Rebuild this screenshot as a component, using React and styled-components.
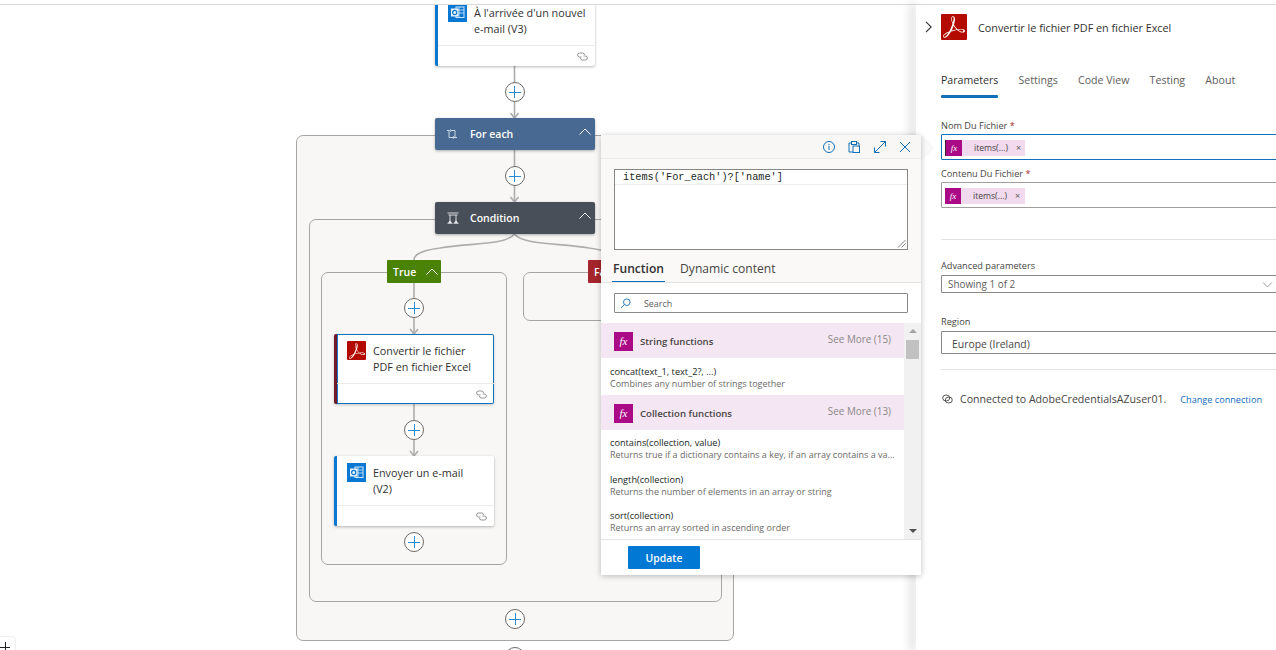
import React from 'react';
import styled, { createGlobalStyle } from 'styled-components';
import { SiAdobeacrobatreader } from 'react-icons/si';

const FONT = `"Open Sans", "Noto Sans", "Liberation Sans", sans-serif`;

const Global = createGlobalStyle`
  html, body { margin: 0; padding: 0; background: #fff; overflow: hidden; }
  * { box-sizing: border-box; }
  body { font-family: ${FONT}; color: #323130; }
`;

const Page = styled.div`
  position: relative;
  width: 1276px;
  height: 650px;
  display: flex;
  flex-direction: column;
  overflow: hidden;
  background: #fff;
`;
const TopStrip = styled.div`
  flex: 0 0 5px;
  border-bottom: 1px solid #d9d9d9;
`;
const Main = styled.div`
  flex: 1;
  display: flex;
  min-height: 0;
`;

/* ---------- diagram canvas ---------- */
const Canvas = styled.div`
  position: relative;
  flex: 1;
  overflow: hidden;
`;
const EdgeLayer = styled.svg`
  position: absolute;
  left: 0;
  top: -5px;
  width: 916px;
  height: 650px;
  z-index: 2;
`;
const GroupBox = styled.div`
  position: absolute;
  left: ${p => p.$x}px;
  top: ${p => p.$y - 5}px;
  width: ${p => p.$w}px;
  height: ${p => p.$h}px;
  background: #f8f7f6;
  border: 1.5px solid #a6a6a6;
  border-radius: 7px;
  z-index: 1;
`;
const CardNode = styled.div`
  position: absolute;
  left: ${p => p.$x}px;
  top: ${p => p.$y - 5}px;
  width: 160px;
  height: 70px;
  display: flex;
  flex-direction: column;
  background: #fff;
  border-radius: 2px;
  border-left: 3px solid ${p => p.$accent};
  box-shadow: ${p => p.$selected
    ? 'inset 0 0 0 1px #0f72bd, 0 1px 3px rgba(0,0,0,.2)'
    : '0 1px 3px rgba(0,0,0,.28)'};
  z-index: 3;
`;
const CardBody = styled.div`
  flex: 1;
  display: flex;
  gap: 7px;
  padding: 7px 4px 0 10px;
`;
const CardText = styled.div`
  font-size: 10.8px;
  line-height: 16px;
  color: #323130;
  padding-top: 2px;
  white-space: nowrap;
`;
const CardFoot = styled.div`
  flex: 0 0 21px;
  display: flex;
  align-items: center;
  justify-content: flex-end;
  padding-right: 7px;
  border-top: 1px solid #edebe9;
`;
const IconTile = styled.span`
  flex: 0 0 ${p => p.$size}px;
  width: ${p => p.$size}px;
  height: ${p => p.$size}px;
  display: flex;
  align-items: center;
  justify-content: center;
  border-radius: 1px;
  background: ${p => p.$bg};
  overflow: hidden;
`;
const HeaderNode = styled.div`
  position: absolute;
  left: 435px;
  top: ${p => p.$y - 5}px;
  width: 160px;
  height: 32px;
  display: flex;
  align-items: center;
  padding: 0 2px 0 12px;
  background: ${p => p.$bg};
  color: #fff;
  border-radius: 2px;
  box-shadow: 0 1px 3px rgba(0,0,0,.3);
  z-index: 3;
`;
const HeaderTitle = styled.span`
  flex: 1;
  margin-left: ${p => p.$gap}px;
  font-size: 10.5px;
  font-weight: 600;
`;
const HeaderChevron = styled.span`
  display: flex;
  margin-top: -4px;
`;
const BranchNode = styled.div`
  position: absolute;
  left: ${p => p.$x}px;
  top: 255px;
  width: 54px;
  height: 23px;
  display: flex;
  align-items: center;
  padding: 0 1px 0 6px;
  background: ${p => p.$bg};
  color: #fff;
  border-radius: 1px;
  font-size: 10.5px;
  font-weight: 600;
  z-index: 3;
`;
const BranchLabel = styled.span`
  flex: 1;
`;
const PlusNode = styled.div`
  position: absolute;
  left: ${p => p.$x - 10}px;
  top: ${p => p.$y - 15}px;
  width: 20px;
  height: 20px;
  border-radius: 50%;
  border: 1px solid #6b6a68;
  background: #fff;
  z-index: 4;
  &::before, &::after {
    content: '';
    position: absolute;
    background: #2a8bd8;
  }
  &::before { left: 3px; right: 3px; top: 8.5px; height: 1px; }
  &::after { top: 3px; bottom: 3px; left: 8.5px; width: 1px; }
`;
const ZoomCorner = styled.div`
  position: absolute;
  left: -8px;
  bottom: -10px;
  width: 24px;
  height: 24px;
  border: 1px solid #eeeeee;
  border-radius: 4px;
  background: #fff;
  z-index: 5;
  &::before, &::after {
    content: '';
    position: absolute;
    background: #222;
  }
  &::before { left: 7px; width: 10px; top: 10px; height: 1px; }
  &::after { left: 11.5px; width: 1px; top: 5px; height: 11px; }
`;

/* ---------- right panel ---------- */
const Panel = styled.aside`
  flex: 0 0 360px;
  position: relative;
  overflow: hidden;
  padding: 9px 0 0 25px;
  background: #fff;
  z-index: 6;
`;
const PanelEdge = styled.div`
  flex: 0 0 0;
  box-shadow: -3px 0 10px 2px rgba(0,0,0,.22);
  z-index: 5;
`;
const PanelHead = styled.header`
  display: flex;
  align-items: center;
  height: 26px;
  margin-left: -16px;
`;
const CollapseBtn = styled.span`
  flex: 0 0 16px;
  display: flex;
`;
const PanelTitle = styled.h1`
  margin: 0 0 0 11px;
  font-size: 10.8px;
  font-weight: 400;
  color: #323130;
`;
const TabRow = styled.nav`
  display: flex;
  gap: 20.2px;
  height: 28px;
  margin-top: 30px;
`;
const PanelTab = styled.span`
  position: relative;
  font-size: 10.6px;
  line-height: 20px;
  color: ${p => (p.$active ? '#323130' : '#605e5c')};
  ${p => p.$active && `
    &::after {
      content: '';
      position: absolute;
      left: 0;
      right: 0;
      top: 25px;
      height: 3px;
      background: #1170b8;
      border-radius: 1px;
    }
  `}
`;
const FieldLabel = styled.label`
  display: block;
  height: 12px;
  margin-top: ${p => p.$top}px;
  margin-bottom: ${p => p.$bottom}px;
  font-size: 9.2px;
  line-height: 12px;
  color: #484644;
  & b { color: #a4262c; font-weight: 400; }
`;
const TokenInput = styled.div`
  width: 345px;
  height: 26px;
  display: flex;
  align-items: center;
  padding: 1px 0 0 3px;
  border: 1px solid ${p => (p.$focus ? '#0f72bd' : '#a19f9d')};
  border-radius: 1px;
`;
const Token = styled.span`
  display: flex;
  align-items: center;
  width: 80px;
  height: 16px;
  background: #f1d9ee;
  color: #484644;
  font-size: 8.6px;
  ${p => p.$caret && `border-left: 1px solid #3b1f39;`}
`;
const TokenIcon = styled.span`
  flex: 0 0 16px;
  height: 16px;
  display: flex;
  align-items: center;
  justify-content: center;
  background: #aa0a86;
  color: #fff;
  font: italic 9px "Liberation Serif", serif;
`;
const TokenText = styled.span`
  margin-left: 12px;
`;
const TokenClose = styled.span`
  margin-left: 8px;
  color: #605e5c;
  font-size: 9px;
`;
const Divider = styled.hr`
  width: 340px;
  margin: ${p => p.$top}px 0 0;
  border: 0;
  border-top: 1px solid #e3e2e0;
`;
const DropDown = styled.div`
  width: 345px;
  height: 18px;
  display: flex;
  align-items: center;
  padding: 0 5px 0 6px;
  border: 1px solid #8a8886;
  border-radius: 1px;
  font-size: 9.9px;
  color: #605e5c;
`;
const DropText = styled.span`
  width: 313px;
`;
const RegionInput = styled.div`
  width: 345px;
  height: 23px;
  display: flex;
  align-items: center;
  padding: 2px 0 0 10px;
  border: 1px solid #8a8886;
  border-radius: 1px;
  font-size: 10.4px;
  color: #484644;
`;
const ConnectionRow = styled.div`
  display: flex;
  align-items: center;
  height: 16px;
  margin-top: 21px;
  padding-left: 1px;
  font-size: 10.6px;
  color: #484644;
  white-space: nowrap;
`;
const ConnectionText = styled.span`
  margin-left: 7px;
`;
const ChangeLink = styled.a`
  margin-left: 14px;
  font-size: 9.15px;
  color: #0f6cbd;
`;

/* ---------- expression popover ---------- */
const Popover = styled.section`
  position: absolute;
  left: 601px;
  top: 135px;
  width: 320px;
  height: 440px;
  display: flex;
  flex-direction: column;
  background: #fff;
  box-shadow: 0 1px 6px rgba(0,0,0,.26);
  z-index: 8;
`;
const Callout = styled.div`
  position: absolute;
  left: 910px;
  top: 139px;
  width: 18.4px;
  height: 18.4px;
  background: #fafafa;
  transform: rotate(45deg);
  box-shadow: 1px -1px 2px rgba(0,0,0,.05);
  z-index: 7;
`;
const PopHead = styled.div`
  flex: 0 0 24px;
  display: flex;
  align-items: center;
  justify-content: flex-end;
  gap: 11.5px;
  padding-right: 9px;
  background: #f8f7f6;
  border-bottom: 1px solid #ecebe9;
`;
const EditorArea = styled.div`
  flex: 0 0 124px;
  padding: 10px 13px 0;
  background: #faf9f8;
  border-bottom: 1px solid #e6e5e3;
`;
const CodeBox = styled.div`
  position: relative;
  height: 81px;
  background: #fff;
  border: 1px solid #8a8886;
`;
const CodeLine = styled.div`
  height: 15px;
  padding-left: 8px;
  font: 10.25px/14px "Liberation Mono", monospace;
  color: #201f1e;
  border-bottom: 1px solid #eeeeee;
`;
const ResizeGrip = styled.svg`
  position: absolute;
  right: 1px;
  bottom: 1px;
`;
const FnTabs = styled.div`
  display: flex;
  gap: 14px;
  height: 24px;
  margin-top: 8px;
  margin-left: -2px;
`;
const FnTab = styled.span`
  position: relative;
  padding: 0 1px;
  font-size: 12.1px;
  line-height: 21px;
  font-weight: ${p => (p.$active ? 600 : 400)};
  color: ${p => (p.$active ? '#323130' : '#484644')};
  ${p => p.$active && `
    &::after {
      content: '';
      position: absolute;
      left: 0;
      right: 0;
      bottom: 0;
      height: 1.5px;
      background: #0f72bd;
    }
  `}
`;
const SearchArea = styled.div`
  flex: 0 0 40px;
  padding: 10px 13px;
`;
const SearchBox = styled.div`
  height: 20px;
  display: flex;
  align-items: center;
  gap: 13px;
  padding: 1px 0 0 5px;
  border: 1px solid #8a8886;
  border-radius: 1px;
  font-size: 8.9px;
  color: #605e5c;
`;
const ListWrap = styled.div`
  flex: 1;
  display: flex;
  min-height: 0;
`;
const FnList = styled.div`
  flex: 1;
  overflow: hidden;
`;
const FnGroup = styled.div`
  height: 35px;
  display: flex;
  align-items: center;
  padding: 1px 13px 0;
  background: #f4e6f3;
`;
const GroupIcon = styled.span`
  flex: 0 0 19px;
  height: 19px;
  display: flex;
  align-items: center;
  justify-content: center;
  background: #aa0a86;
  color: #fff;
  font: italic 11px "Liberation Serif", serif;
`;
const GroupName = styled.span`
  flex: 1;
  margin-left: 7px;
  font-size: 9.6px;
  font-weight: 600;
  color: #484644;
`;
const SeeMore = styled.span`
  font-size: 9.9px;
  color: #8a8886;
  position: relative;
  top: -2px;
`;
const FnItem = styled.div`
  height: ${p => p.$h}px;
  padding: ${p => p.$pad}px 6px 0 9px;
`;
const FnSig = styled.div`
  font-size: 9.2px;
  line-height: 12px;
  color: #201f1e;
`;
const FnDesc = styled.div`
  font-size: 9px;
  line-height: 12px;
  color: #6b6a68;
  white-space: nowrap;
  overflow: hidden;
`;
const Scrollbar = styled.div`
  flex: 0 0 17px;
  position: relative;
  background: #f1f1f1;
`;
const ScrollThumb = styled.div`
  position: absolute;
  left: 2px;
  right: 2px;
  top: 17px;
  height: 19px;
  background: #c1c1c1;
`;
const ScrollArrow = styled.span`
  position: absolute;
  left: 5px;
  ${p => (p.$up ? 'top: 6px' : 'bottom: 6px')};
  border-left: 4px solid transparent;
  border-right: 4px solid transparent;
  ${p => (p.$up ? 'border-bottom: 4px solid #a3a3a3' : 'border-top: 4px solid #505050')};
`;
const PopFoot = styled.div`
  flex: 0 0 36px;
  display: flex;
  align-items: flex-start;
  padding: 6px 0 0 27px;
  border-top: 1px solid #e6e5e3;
`;
const UpdateBtn = styled.button`
  width: 72px;
  height: 23px;
  padding: 0;
  border: 0;
  border-radius: 1px;
  background: #0078d4;
  color: #fff;
  font-family: ${FONT};
  font-size: 10.4px;
  font-weight: 600;
`;

/* ---------- drawings ---------- */
const Chevron = ({ color = '#fff', up = true, size = 16, sw = 1 }) => (
  <svg width={size} height={size} viewBox="0 0 16 16" fill="none" stroke={color} strokeWidth={sw}>
    <path d={up ? 'M2.5 10.5 8 5l5.5 5.5' : 'M2.5 5.5 8 11l5.5-5.5'} />
  </svg>
);
const OutlookGlyph = () => (
  <svg width="19" height="19" viewBox="0 0 19 19">
    <rect width="19" height="19" fill="#0a78d2" />
    <rect x="8" y="4" width="8" height="10.5" fill="none" stroke="#cfe6f8" strokeWidth="1" />
    <path d="M8 7h8M8 10h8M11 4v10" stroke="#cfe6f8" strokeWidth=".8" />
    <rect x="3" y="5.5" width="7.5" height="8" fill="#e8f3fc" />
    <circle cx="6.7" cy="9.5" r="2.1" fill="none" stroke="#0a78d2" strokeWidth="1.2" />
  </svg>
);
const PdfGlyph = ({ size }) => (
  <IconTile $size={size} $bg="#b30b00">
    <SiAdobeacrobatreader size={Math.round(size * 0.86)} color="#fff" />
  </IconTile>
);
const LinkGlyph = ({ color = '#8a8886' }) => (
  <svg width="11" height="9" viewBox="0 0 11 9" fill="none" stroke={color} strokeWidth=".9">
    <path d="M4.5 5H2.6a2 2 0 0 1 0-4h3a2 2 0 0 1 1.9 2" />
    <path d="M6.5 4h1.9a2 2 0 0 1 0 4h-3a2 2 0 0 1-1.9-2" />
  </svg>
);
const LoopGlyph = () => (
  <svg width="10" height="10" viewBox="0 0 10 10" fill="none" stroke="#dbe4ef" strokeWidth=".9">
    <path d="M0 1.500h2v7h6" />
    <path d="M10 8.500H8v-7H3.500" />
    <path d="M4 0 2.800 1.500 4 3M6 7 7.200 8.500 6 10" strokeWidth=".7" />
  </svg>
);
const ConditionGlyph = () => (
  <svg width="12" height="12" viewBox="0 0 12 12" fill="none" stroke="#e6e8ea" strokeWidth=".9">
    <path d="M.5 1h11M1.500 3h9M3 3v5M9 3v5M.5 11.300h5M6.500 11.300h5" />
    <path d="M3 7.500 1.200 11h3.600zM9 7.500 7.200 11h3.600z" fill="#e6e8ea" stroke="none" />
  </svg>
);
const Arrow = ({ x, y }) => <path d={`M${x - 4} ${y - 5}L${x} ${y}L${x + 4} ${y - 5}`} />;

const Edges = () => (
  <EdgeLayer viewBox="0 0 916 650" fill="none" stroke="#adadad" strokeWidth="1.6">
    <path d="M514.500 66V118M514.500 150V202M414 283V334M414 404V456" />
    <path d="M514.500 234C506 245 470 243 440 248C425 250 414 253 414 260" />
    <path d="M514.500 234C523 245 559 243 589 248C604 250 615 253 615 260" />
    <Arrow x={514.5} y={118} />
    <Arrow x={514.5} y={202} />
    <Arrow x={414} y={334} />
    <Arrow x={414} y={456} />
  </EdgeLayer>
);

const ActionCard = ({ x, y, accent, selected, icon, lines }) => (
  <CardNode $x={x} $y={y} $accent={accent} $selected={selected}>
    <CardBody>
      {icon}
      <CardText>{lines[0]}<br />{lines[1]}</CardText>
    </CardBody>
    <CardFoot><LinkGlyph /></CardFoot>
  </CardNode>
);

const TokenChip = ({ caret }) => (
  <Token $caret={caret}>
    <TokenIcon>fx</TokenIcon>
    <TokenText>items(...)</TokenText>
    <TokenClose>×</TokenClose>
  </Token>
);

const FunctionGroup = ({ name, more }) => (
  <FnGroup>
    <GroupIcon>fx</GroupIcon>
    <GroupName>{name}</GroupName>
    <SeeMore>See More ({more})</SeeMore>
  </FnGroup>
);

const FunctionItem = ({ sig, desc, h, pad }) => (
  <FnItem $h={h} $pad={pad}>
    <FnSig>{sig}</FnSig>
    <FnDesc>{desc}</FnDesc>
  </FnItem>
);

export default function App() {
  return (
    <Page>
      <Global />
      <TopStrip />
      <Main>
        <Canvas>
          <GroupBox $x={296} $y={135} $w={438} $h={506} />
          <GroupBox $x={309} $y={219} $w={413} $h={383} />
          <GroupBox $x={321} $y={272} $w={186} $h={293} />
          <GroupBox $x={523} $y={272} $w={186} $h={49} />
          <Edges />
          <ActionCard x={435} y={-4} accent="#0a78d2" icon={<OutlookGlyph />} lines={["À l'arrivée d'un nouvel", 'e-mail (V3)']} />
          <HeaderNode $y={118} $bg="#486991">
            <LoopGlyph />
            <HeaderTitle $gap={13}>For each</HeaderTitle>
            <HeaderChevron><Chevron /></HeaderChevron>
          </HeaderNode>
          <HeaderNode $y={202} $bg="#484f58">
            <ConditionGlyph />
            <HeaderTitle $gap={11}>Condition</HeaderTitle>
            <HeaderChevron><Chevron /></HeaderChevron>
          </HeaderNode>
          <BranchNode $x={387} $bg="#498205">
            <BranchLabel>True</BranchLabel>
            <Chevron />
          </BranchNode>
          <BranchNode $x={588} $bg="#a4262c">
            <BranchLabel>False</BranchLabel>
          </BranchNode>
          <ActionCard x={334} y={334} accent="#701b2a" selected icon={<PdfGlyph size={19} />} lines={['Convertir le fichier', 'PDF en fichier Excel']} />
          <ActionCard x={334} y={456} accent="#0a78d2" icon={<OutlookGlyph />} lines={['Envoyer un e-mail', '(V2)']} />
          <PlusNode $x={514.5} $y={92} />
          <PlusNode $x={514.5} $y={176} />
          <PlusNode $x={414} $y={308} />
          <PlusNode $x={414} $y={430} />
          <PlusNode $x={414} $y={542} />
          <PlusNode $x={515} $y={619} />
          <PlusNode $x={515} $y={657} />
          <ZoomCorner />
        </Canvas>
        <PanelEdge />
        <Panel>
          <PanelHead>
            <CollapseBtn>
              <svg width="8" height="12" viewBox="0 0 8 12" fill="none" stroke="#323130" strokeWidth="1.1">
                <path d="M1 .8 6.200 6 1 11.200" />
              </svg>
            </CollapseBtn>
            <PdfGlyph size={26} />
            <PanelTitle>Convertir le fichier PDF en fichier Excel</PanelTitle>
          </PanelHead>
          <TabRow>
            <PanelTab $active>Parameters</PanelTab>
            <PanelTab>Settings</PanelTab>
            <PanelTab>Code View</PanelTab>
            <PanelTab>Testing</PanelTab>
            <PanelTab>About</PanelTab>
          </TabRow>
          <FieldLabel $top={22} $bottom={2}>Nom Du Fichier <b>*</b></FieldLabel>
          <TokenInput $focus><TokenChip caret /></TokenInput>
          <FieldLabel $top={8} $bottom={2}>Contenu Du Fichier <b>*</b></FieldLabel>
          <TokenInput><TokenChip /></TokenInput>
          <Divider $top={31} />
          <FieldLabel $top={20} $bottom={3}>Advanced parameters</FieldLabel>
          <DropDown>
            <DropText>Showing 1 of 2</DropText>
            <Chevron up={false} color="#8a8886" size={13} />
          </DropDown>
          <FieldLabel $top={23} $bottom={3}>Region</FieldLabel>
          <RegionInput>Europe (Ireland)</RegionInput>
          <Divider $top={15} />
          <ConnectionRow>
            <svg width="11" height="10" viewBox="0 0 11 10" fill="none" stroke="#484644" strokeWidth=".9">
              <ellipse cx="4.200" cy="4" rx="3.500" ry="3" />
              <ellipse cx="6.800" cy="6" rx="3.500" ry="3" />
            </svg>
            <ConnectionText>Connected to AdobeCredentialsAZuser01.</ConnectionText>
            <ChangeLink>Change connection</ChangeLink>
          </ConnectionRow>
        </Panel>
      </Main>
      <Callout />
      <Popover>
        <PopHead>
          <svg width="14" height="14" viewBox="0 0 14 14" fill="none" stroke="#1170b8" strokeWidth="1">
            <circle cx="7" cy="7" r="5.500" />
            <path d="M7 6v4M7 4v1.200" />
          </svg>
          <svg width="14" height="14" viewBox="0 0 14 14" fill="none" stroke="#1170b8" strokeWidth="1">
            <path d="M4.500 3H2v9h4M9.500 3H12v3" />
            <rect x="4.500" y="1.500" width="5" height="3" />
            <rect x="6" y="6" width="6.500" height="6.500" />
          </svg>
          <svg width="14" height="14" viewBox="0 0 14 14" fill="none" stroke="#1170b8" strokeWidth="1">
            <path d="M1.500 12.500l11-11M7.500 1.500h5v5M1.500 7.500v5h5" />
          </svg>
          <svg width="14" height="14" viewBox="0 0 14 14" fill="none" stroke="#1170b8" strokeWidth="1">
            <path d="M2 2l10 10M12 2L2 12" />
          </svg>
        </PopHead>
        <EditorArea>
          <CodeBox>
            <CodeLine>items('For_each')?['name']</CodeLine>
            <ResizeGrip width="9" height="9" viewBox="0 0 9 9" fill="none" stroke="#8a8886" strokeWidth="1">
              <path d="M1 8.500 8.500 1M4.500 8.500l4-4" />
            </ResizeGrip>
          </CodeBox>
          <FnTabs>
            <FnTab $active>Function</FnTab>
            <FnTab>Dynamic content</FnTab>
          </FnTabs>
        </EditorArea>
        <SearchArea>
          <SearchBox>
            <svg width="11" height="11" viewBox="0 0 11 11" fill="none" stroke="#1170b8" strokeWidth=".9">
              <circle cx="6.800" cy="4.200" r="3.300" />
              <path d="M4.400 6.600 1 10" />
            </svg>
            Search
          </SearchBox>
        </SearchArea>
        <ListWrap>
          <FnList>
            <FunctionGroup name="String functions" more={15} />
            <FunctionItem h={37} pad={8} sig="concat(text_1, text_2?, ...)" desc="Combines any number of strings together" />
            <FunctionGroup name="Collection functions" more={13} />
            <FunctionItem h={37} pad={7} sig="contains(collection, value)" desc="Returns true if a dictionary contains a key, if an array contains a va..." />
            <FunctionItem h={36} pad={7} sig="length(collection)" desc="Returns the number of elements in an array or string" />
            <FunctionItem h={36} pad={7} sig="sort(collection)" desc="Returns an array sorted in ascending order" />
          </FnList>
          <Scrollbar>
            <ScrollArrow $up />
            <ScrollThumb />
            <ScrollArrow />
          </Scrollbar>
        </ListWrap>
        <PopFoot><UpdateBtn>Update</UpdateBtn></PopFoot>
      </Popover>
    </Page>
  );
}
